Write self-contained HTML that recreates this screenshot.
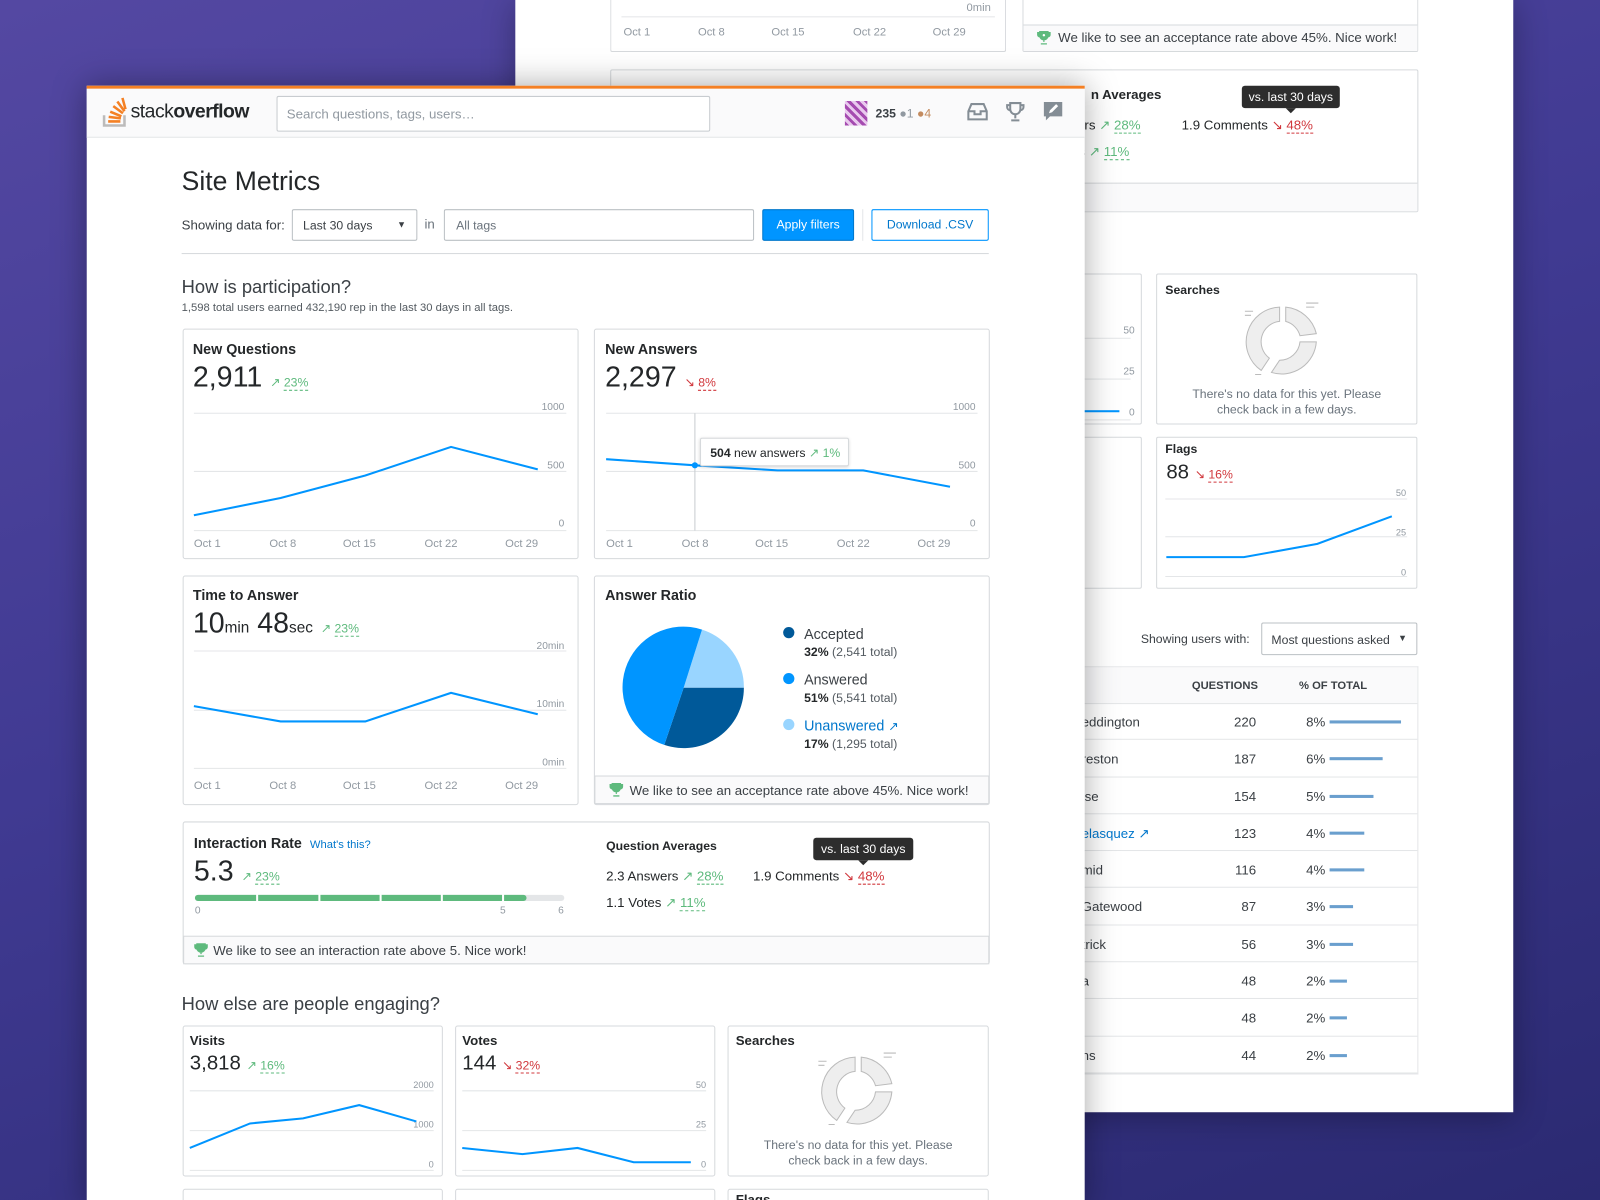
<!DOCTYPE html>
<html><head><meta charset="utf-8">
<style>
*{margin:0;padding:0;box-sizing:border-box}
html,body{width:1600px;height:1200px;overflow:hidden}
body{font-family:"Liberation Sans",Arial,sans-serif;color:#242729;background:#3a3585}
#s{position:absolute;left:0;top:0;width:1568px;height:1176px;transform:scale(1.020408);transform-origin:0 0;overflow:hidden;background:linear-gradient(160deg,#5448a2 0%,#403a92 45%,#2b2a72 100%)}
.a{position:absolute}
.card{position:absolute;background:#fff;border:1px solid #d6d9dc;border-radius:2px}
.t{position:absolute;white-space:nowrap}
.h{font-weight:bold;font-size:14px;color:#242729}
.g{color:#5eba7d}.r{color:#d1383d}
.u{border-bottom:1px dashed currentColor;line-height:1}
.sm{font-size:11px;color:#9199a1}
.foot{position:absolute;left:0;right:0;bottom:0;background:#fafafb;border-top:1px solid #d6d9dc;font-size:13px;color:#3b4045;padding-left:34px}
.tr{position:absolute}
</style></head><body><div id="s">

<!-- background window -->
<div class="a" style="left:505px;top:0;width:978px;height:1090px;background:#fff;box-shadow:0 4px 30px rgba(0,0,0,.3)"></div>
<div class="card" style="left:598px;top:-5px;width:388px;height:56px;border-top:none">
  <div class="a" style="left:10px;right:10px;top:21px;border-top:1px solid #e4e6e8"></div>
  <div class="t sm" style="right:14px;top:7px">0min</div>
  <div class="t sm" style="left:12px;top:31px">Oct 1</div><div class="t sm" style="left:85px;top:31px">Oct 8</div><div class="t sm" style="left:157px;top:31px">Oct 15</div><div class="t sm" style="left:237px;top:31px">Oct 22</div><div class="t sm" style="left:315px;top:31px">Oct 29</div>
</div>
<div class="card" style="left:1002px;top:-5px;width:388px;height:56px;border-top:none">
  <div class="foot" style="height:26px;line-height:24px;padding-left:34px">We like to see an acceptance rate above 45%. Nice work!</div>
  <svg class="tr" style="left:13px;top:35px" width="14" height="14" viewBox="0 0 14 14"><path d="M3 1h8v4a4 4 0 0 1-8 0zM3 2H1v2a2 2 0 0 0 2 2M11 2h2v2a2 2 0 0 1-2 2M7 9v2M4 13h6" fill="#5eba7d" stroke="#5eba7d" stroke-width="1.3"/><circle cx="7" cy="4.5" r="1.2" fill="#fff"/></svg>
</div>
<div class="card" style="left:598px;top:68px;width:792px;height:140px">
  <div class="foot" style="height:28px"></div>
  <div class="t h" style="left:470px;top:16px;font-size:13px">n Averages</div>
  <div class="t" style="left:450px;top:46px;font-size:13px">vers <span class="g">↗ <span class="u">28%</span></span></div>
  <div class="t" style="left:458px;top:72px;font-size:13px">s <span class="g">↗ <span class="u">11%</span></span></div>
  <div class="t" style="left:559px;top:46px;font-size:13px">1.9 Comments <span class="r">↘ <span class="u">48%</span></span></div>
</div>
<div class="a" style="left:1217px;top:84px;width:96px;height:22px;background:#2d2d2d;border-radius:3px;color:#fff;font-size:12px;line-height:22px;text-align:center">vs. last 30 days</div>
<div class="a" style="left:1260px;top:106px;border:5px solid transparent;border-top-color:#2d2d2d"></div>

<div class="card" style="left:1000px;top:268px;width:119px;height:148px">
  <div class="a" style="left:0;right:10px;top:62px;border-top:1px solid #e4e6e8"></div><div class="a" style="left:0;right:10px;top:102px;border-top:1px solid #e4e6e8"></div><div class="a" style="left:0;right:10px;top:142px;border-top:1px solid #e4e6e8"></div>
  <div class="t sm" style="right:6px;top:50px;font-size:10px">50</div><div class="t sm" style="right:6px;top:90px;font-size:10px">25</div><div class="t sm" style="right:6px;top:130px;font-size:10px">0</div>
  <div class="a" style="left:60px;width:36px;top:133px;border-top:2px solid #0095ff"></div>
</div>
<div class="card" style="left:1133px;top:268px;width:256px;height:148px">
  <div class="t h" style="left:8px;top:8px;font-size:12px">Searches</div>
  <svg class="a" style="left:82px;top:26px" width="80" height="76" viewBox="0 0 80 76"><g fill="#eee" stroke="#bbb" stroke-width="1"><path d="M38 6 A34 34 0 0 0 20 68 L28 56 A20 20 0 0 1 38 20Z"/><path d="M44 6 A34 34 0 0 1 74 32 L58 34 A20 20 0 0 0 44 20Z"/><path d="M74 40 A34 34 0 0 1 30 70 L38 58 A20 20 0 0 0 58 40Z"/></g><g stroke="#bbb"><path d="M4 10h8M4 14h6M64 2h12M64 6h8M14 72h6"/></g></svg>
  <div class="a" style="left:0;right:0;top:110px;text-align:center;font-size:12px;color:#6a737c;line-height:15px">There's no data for this yet. Please<br>check back in a few days.</div>
</div>
<div class="card" style="left:1000px;top:428px;width:119px;height:149px"></div>
<div class="card" style="left:1133px;top:428px;width:256px;height:149px">
  <div class="t h" style="left:8px;top:4px;font-size:12px">Flags</div>
  <div class="t" style="left:9px;top:23px;font-size:20px">88 <span class="r" style="font-size:12px">↘ <span class="u">16%</span></span></div>
  <svg class="a" style="left:0;top:0" width="256" height="149"><g stroke="#e4e6e8"><path d="M8 60H245M8 97H245M8 136H245"/></g><g fill="#9199a1" font-size="9" text-anchor="end" font-family="Liberation Sans"><text x="244" y="57">50</text><text x="244" y="96">25</text><text x="244" y="135">0</text></g><polyline points="9,117 85,117 157,104 230,77" fill="none" stroke="#0095ff" stroke-width="2"/></svg>
</div>
<div class="t" style="left:1118px;top:619px;font-size:12px;color:#3b4045">Showing users with:</div>
<div class="a" style="left:1236px;top:610px;width:153px;height:32px;border:1px solid #bbc0c4;border-radius:2px;font-size:12px;color:#3b4045;padding:9px 9px">Most questions asked <span style="float:right;font-size:9px">▼</span></div>
<div class="a" style="left:1060px;top:653px;width:330px;height:400px;border:1px solid #e4e6e8;border-left:none">
  <div class="a" style="left:0;right:0;top:0;height:36px;background:#fafafb;border-bottom:1px solid #e4e6e8"></div>
  <div class="t" style="left:108px;top:12px;font-size:11px;font-weight:bold;color:#3b4045">QUESTIONS</div>
  <div class="t" style="left:213px;top:12px;font-size:11px;font-weight:bold;color:#3b4045">% OF TOTAL</div>
</div>

<!-- table rows -->
<div class="a" style="left:1060px;top:689px;width:329px;font-size:13px;color:#3b4045">
<div style="height:36.3px;border-bottom:1px solid #e4e6e8;position:relative"><span class="t" style="left:0;top:11px">eddington</span><span class="t" style="right:158px;top:11px">220</span><span class="t" style="left:220px;top:11px">8%</span><span class="a" style="left:243px;top:17px;width:70px;height:3px;background:#6a9fce"></span></div>
<div style="height:36.3px;border-bottom:1px solid #e4e6e8;position:relative"><span class="t" style="left:0;top:11px">reston</span><span class="t" style="right:158px;top:11px">187</span><span class="t" style="left:220px;top:11px">6%</span><span class="a" style="left:243px;top:17px;width:52px;height:3px;background:#6a9fce"></span></div>
<div style="height:36.3px;border-bottom:1px solid #e4e6e8;position:relative"><span class="t" style="left:0;top:11px">ise</span><span class="t" style="right:158px;top:11px">154</span><span class="t" style="left:220px;top:11px">5%</span><span class="a" style="left:243px;top:17px;width:43px;height:3px;background:#6a9fce"></span></div>
<div style="height:36.3px;border-bottom:1px solid #e4e6e8;position:relative"><span class="t" style="left:0;top:11px;color:#0077cc">elasquez ↗</span><span class="t" style="right:158px;top:11px">123</span><span class="t" style="left:220px;top:11px">4%</span><span class="a" style="left:243px;top:17px;width:34px;height:3px;background:#6a9fce"></span></div>
<div style="height:36.3px;border-bottom:1px solid #e4e6e8;position:relative"><span class="t" style="left:0;top:11px">mid</span><span class="t" style="right:158px;top:11px">116</span><span class="t" style="left:220px;top:11px">4%</span><span class="a" style="left:243px;top:17px;width:34px;height:3px;background:#6a9fce"></span></div>
<div style="height:36.3px;border-bottom:1px solid #e4e6e8;position:relative"><span class="t" style="left:0;top:11px">Gatewood</span><span class="t" style="right:158px;top:11px">87</span><span class="t" style="left:220px;top:11px">3%</span><span class="a" style="left:243px;top:17px;width:23px;height:3px;background:#6a9fce"></span></div>
<div style="height:36.3px;border-bottom:1px solid #e4e6e8;position:relative"><span class="t" style="left:0;top:11px">trick</span><span class="t" style="right:158px;top:11px">56</span><span class="t" style="left:220px;top:11px">3%</span><span class="a" style="left:243px;top:17px;width:23px;height:3px;background:#6a9fce"></span></div>
<div style="height:36.3px;border-bottom:1px solid #e4e6e8;position:relative"><span class="t" style="left:0;top:11px">a</span><span class="t" style="right:158px;top:11px">48</span><span class="t" style="left:220px;top:11px">2%</span><span class="a" style="left:243px;top:17px;width:17px;height:3px;background:#6a9fce"></span></div>
<div style="height:36.3px;border-bottom:1px solid #e4e6e8;position:relative"><span class="t" style="right:158px;top:11px">48</span><span class="t" style="left:220px;top:11px">2%</span><span class="a" style="left:243px;top:17px;width:17px;height:3px;background:#6a9fce"></span></div>
<div style="height:36.3px;border-bottom:1px solid #e4e6e8;position:relative"><span class="t" style="left:0;top:11px">ns</span><span class="t" style="right:158px;top:11px">44</span><span class="t" style="left:220px;top:11px">2%</span><span class="a" style="left:243px;top:17px;width:17px;height:3px;background:#6a9fce"></span></div>
</div>

<!-- front window -->
<div class="a" style="left:85px;top:84px;width:978px;height:1100px;background:#fff;box-shadow:0 0 30px rgba(0,0,0,.35);border-top:3px solid #f48024">
  <div class="a" style="left:0;top:0;width:978px;height:48px;background:#fafafb;border-bottom:1px solid #e4e6e8"></div>
  <svg class="a" style="left:15px;top:6px" width="26" height="32" viewBox="0 0 26 32"><path d="M2 20v10h20V20" fill="none" stroke="#bcbbbb" stroke-width="2.5"/><g stroke="#f48024" stroke-width="2.5"><path d="M6 26h12M6.5 21.5l12 1.5M8 16.5l11 4.5M11 11l9.5 7M15 6.5l7 9.5M20 3l3 11"/></g></svg>
  <div class="t" style="left:43px;top:12px;font-size:19px;letter-spacing:-.5px;color:#242729">stack<b>overflow</b></div>
  <div class="a" style="left:186px;top:7px;width:425px;height:35px;border:1px solid #c8ccd0;border-radius:2px;background:#fff;font-size:13px;color:#9199a1;padding:9px 9px">Search questions, tags, users…</div>
  <div class="a" style="left:743px;top:12px;width:22px;height:24px;background:repeating-linear-gradient(45deg,#a54bb0 0 3px,#e9c9ee 3px 6px)"></div>
  <div class="t" style="left:773px;top:17px;font-size:12px;font-weight:bold;color:#3b4045">235 <span style="color:#9199a1;font-weight:normal">●1</span> <span style="color:#c38b5f;font-weight:normal">●4</span></div>
  <svg class="a" style="left:862px;top:13px" width="22" height="20"><path d="M2 9l3-7h12l3 7v8H2z M2 9h6v3h6V9h6" fill="none" stroke="#848d95" stroke-width="2"/></svg>
  <svg class="a" style="left:900px;top:12px" width="20" height="22"><path d="M5 2h10v6a5 5 0 0 1-10 0zM5 4H2v2a3 3 0 0 0 3 3M15 4h3v2a3 3 0 0 1-3 3M10 13v4M6 19h8" fill="none" stroke="#848d95" stroke-width="2"/></svg>
  <svg class="a" style="left:937px;top:12px" width="20" height="22"><path d="M1 1h18v14H7l-4 4v-4H1z" fill="#848d95"/><path d="M6 12l1-3 6-6 2 2-6 6z" fill="#fff"/></svg>
</div>

<div class="t" style="left:178px;top:162px;font-size:26px;color:#242729">Site Metrics</div>
<div class="t" style="left:178px;top:213px;font-size:13px;color:#3b4045">Showing data for:</div>
<div class="a" style="left:286px;top:205px;width:123px;height:31px;border:1px solid #bbc0c4;border-radius:2px;font-size:12px;color:#3b4045;padding:8px 10px">Last 30 days<span style="float:right;font-size:9px;padding-top:1px">▼</span></div>
<div class="t" style="left:416px;top:212px;font-size:13px;color:#6a737c">in</div>
<div class="a" style="left:435px;top:205px;width:304px;height:31px;border:1px solid #bbc0c4;border-radius:2px;font-size:12px;color:#6a737c;padding:8px 11px">All tags</div>
<div class="a" style="left:747px;top:205px;width:90px;height:31px;background:#0095ff;border:1px solid #07c;border-radius:2px;color:#fff;font-size:12px;text-align:center;line-height:29px">Apply filters</div>
<div class="a" style="left:845px;top:205px;height:31px;border-left:1px solid #e4e6e8"></div>
<div class="a" style="left:854px;top:205px;width:115px;height:31px;border:1px solid #0095ff;border-radius:2px;color:#07c;font-size:12px;text-align:center;line-height:29px">Download .CSV</div>
<div class="a" style="left:178px;top:248px;width:791px;border-top:1px solid #d6d9dc"></div>
<div class="t" style="left:178px;top:271px;font-size:18px;color:#3b4045">How is participation?</div>
<div class="t" style="left:178px;top:296px;font-size:11px;color:#535a60">1,598 total users earned 432,190 rep in the last 30 days in all tags.</div>

<svg class="a" style="left:0;top:0" width="1568" height="1176" font-family="Liberation Sans">
<g fill="#fff" stroke="#d6d9dc"><rect x="179.5" y="322.5" width="387" height="225" rx="2"/><rect x="582.5" y="322.5" width="387" height="225" rx="2"/><rect x="179.5" y="564.5" width="387" height="224" rx="2"/><rect x="582.5" y="564.5" width="387" height="224" rx="2"/><rect x="179.5" y="805.5" width="790" height="139" rx="2"/><rect x="179.5" y="1005.5" width="254" height="147" rx="2"/><rect x="446.5" y="1005.5" width="254" height="147" rx="2"/><rect x="713.5" y="1005.5" width="255" height="147" rx="2"/><rect x="179.5" y="1165.5" width="254" height="40" rx="2"/><rect x="446.5" y="1165.5" width="254" height="40" rx="2"/><rect x="713.5" y="1165.5" width="255" height="40" rx="2"/></g>
<g fill="#fafafb" stroke="#d6d9dc"><rect x="583" y="760.5" width="386" height="27"/><rect x="180" y="917.5" width="789" height="27"/></g>
<g stroke="#e4e6e8"><path d="M190 405H555M190 462H555M190 520H555M594 405H958M594 462H958M594 520H958M190 638H555M190 696H555M190 753H555M186 1069H425M186 1108H425M186 1147H425M453 1069H692M453 1108H692M453 1147H692"/></g>
<path d="M681 405V520" stroke="#c8ccd0"/>
<g fill="#9199a1" font-size="10" text-anchor="end"><text x="553" y="402">1000</text><text x="553" y="459">500</text><text x="553" y="516">0</text><text x="956" y="402">1000</text><text x="956" y="459">500</text><text x="956" y="516">0</text><text x="553" y="636">20min</text><text x="553" y="693">10min</text><text x="553" y="750">0min</text><text x="425" y="1066" font-size="9">2000</text><text x="425" y="1105" font-size="9">1000</text><text x="425" y="1144" font-size="9">0</text><text x="692" y="1066" font-size="9">50</text><text x="692" y="1105" font-size="9">25</text><text x="692" y="1144" font-size="9">0</text></g>
<g fill="#9199a1" font-size="11"><text x="190" y="536">Oct 1</text><text x="264" y="536">Oct 8</text><text x="336" y="536">Oct 15</text><text x="416" y="536">Oct 22</text><text x="495" y="536">Oct 29</text><text x="594" y="536">Oct 1</text><text x="668" y="536">Oct 8</text><text x="740" y="536">Oct 15</text><text x="820" y="536">Oct 22</text><text x="899" y="536">Oct 29</text><text x="190" y="773">Oct 1</text><text x="264" y="773">Oct 8</text><text x="336" y="773">Oct 15</text><text x="416" y="773">Oct 22</text><text x="495" y="773">Oct 29</text></g>
<g fill="none" stroke="#0095ff" stroke-width="2"><polyline points="190,505 275,488 358,466 442,438 527,460"/><polyline points="594,450 681,456 762,461 846,461 931,477"/><polyline points="190,692 275,707 358,707 442,679 527,700"/><polyline points="186,1125 245,1101 297,1096 352,1083 408,1099"/><polyline points="453,1125 512,1131 566,1125 621,1139 677,1139"/></g>
<circle cx="681" cy="456" r="3" fill="#0095ff"/>
<path d="M670 674L688 617A59 59 0 0 1 729 674Z" fill="#99d5ff"/>
<path d="M670 674L729 674A59 59 0 0 1 651 730Z" fill="#005999"/>
<path d="M670 674L651 730A59 59 0 0 1 688 617Z" fill="#0095ff"/>
<circle cx="773" cy="620" r="5.5" fill="#005999"/><circle cx="773" cy="665" r="5.5" fill="#0095ff"/><circle cx="773" cy="710" r="5.5" fill="#99d5ff"/>
<rect x="191" y="877" width="362" height="6" rx="3" fill="#e4e6e8"/>
<rect x="191" y="877" width="325" height="6" rx="3" fill="#5eba7d"/>
<g stroke="#fff" stroke-width="2"><path d="M252 876v8M313 876v8M373 876v8M433 876v8M493 876v8"/></g>
<g fill="#9199a1" font-size="10"><text x="191" y="895">0</text><text x="490" y="895">5</text><text x="547" y="895">6</text></g>
<g transform="translate(800,1030)"><g fill="#eee" stroke="#bbb"><path d="M38 6 A34 34 0 0 0 20 68 L28 56 A20 20 0 0 1 38 20Z"/><path d="M44 6 A34 34 0 0 1 74 32 L58 34 A20 20 0 0 0 44 20Z"/><path d="M74 40 A34 34 0 0 1 30 70 L38 58 A20 20 0 0 0 58 40Z"/></g><path d="M2 10h8M2 14h6M66 2h12M66 6h8M12 72h6" stroke="#bbb"/></g>
<!-- trophies -->
<g fill="#5eba7d" stroke="#5eba7d" stroke-width="1.3"><g transform="translate(597,767)"><path d="M3 1h8v4a4 4 0 0 1-8 0zM3 2H1v2a2 2 0 0 0 2 2M11 2h2v2a2 2 0 0 1-2 2M7 9v2M4 13h6"/></g><g transform="translate(190,924)"><path d="M3 1h8v4a4 4 0 0 1-8 0zM3 2H1v2a2 2 0 0 0 2 2M11 2h2v2a2 2 0 0 1-2 2M7 9v2M4 13h6"/></g></g>
</svg>

<div class="t h" style="left:189px;top:334px">New Questions</div>
<div class="t" style="left:189px;top:354px;font-size:28px">2,911 <span class="g" style="font-size:12px">↗ <span class="u">23%</span></span></div>
<div class="t h" style="left:593px;top:334px">New Answers</div>
<div class="t" style="left:593px;top:354px;font-size:28px">2,297 <span class="r" style="font-size:12px">↘ <span class="u">8%</span></span></div>
<div class="a" style="left:686px;top:429px;width:146px;height:28px;background:#fff;border:1px solid #d6d9dc;border-radius:2px;box-shadow:0 1px 3px rgba(0,0,0,.15);font-size:12px;padding:7px 9px;white-space:nowrap"><b>504</b> new answers <span class="g">↗ 1%</span></div>
<div class="t h" style="left:189px;top:575px">Time to Answer</div>
<div class="t" style="left:189px;top:595px;font-size:28px">10<span style="font-size:15px">min</span> 48<span style="font-size:15px">sec</span> <span class="g" style="font-size:12px">↗ <span class="u">23%</span></span></div>
<div class="t h" style="left:593px;top:575px">Answer Ratio</div>
<div class="t" style="left:788px;top:613px;font-size:14px;color:#3b4045">Accepted</div>
<div class="t" style="left:788px;top:632px;font-size:12px;color:#535a60"><b style="color:#242729">32%</b> (2,541 total)</div>
<div class="t" style="left:788px;top:658px;font-size:14px;color:#3b4045">Answered</div>
<div class="t" style="left:788px;top:677px;font-size:12px;color:#535a60"><b style="color:#242729">51%</b> (5,541 total)</div>
<div class="t" style="left:788px;top:703px;font-size:14px;color:#0077cc">Unanswered <span style="font-size:12px">↗</span></div>
<div class="t" style="left:788px;top:722px;font-size:12px;color:#535a60"><b style="color:#242729">17%</b> (1,295 total)</div>
<div class="t" style="left:617px;top:767px;font-size:13px;color:#3b4045">We like to see an acceptance rate above 45%. Nice work!</div>

<div class="t h" style="left:190px;top:818px">Interaction Rate <span style="font-weight:normal;font-size:11px;color:#0077cc;margin-left:4px">What's this?</span></div>
<div class="t" style="left:190px;top:838px;font-size:28px">5.3 <span class="g" style="font-size:12px">↗ <span class="u">23%</span></span></div>
<div class="t h" style="left:594px;top:822px;font-size:12px">Question Averages</div>
<div class="t" style="left:594px;top:851px;font-size:13px">2.3 Answers <span class="g">↗ <span class="u">28%</span></span></div>
<div class="t" style="left:594px;top:877px;font-size:13px">1.1 Votes <span class="g">↗ <span class="u">11%</span></span></div>
<div class="t" style="left:738px;top:851px;font-size:13px">1.9 Comments <span class="r">↘ <span class="u">48%</span></span></div>
<div class="a" style="left:797px;top:821px;width:98px;height:22px;background:#2d2d2d;border-radius:3px;color:#fff;font-size:12px;line-height:22px;text-align:center">vs. last 30 days</div>
<div class="a" style="left:841px;top:843px;border:5px solid transparent;border-top-color:#2d2d2d"></div>
<div class="t" style="left:209px;top:924px;font-size:13px;color:#3b4045">We like to see an interaction rate above 5. Nice work!</div>

<div class="t" style="left:178px;top:974px;font-size:18px;color:#3b4045">How else are people engaging?</div>
<div class="t h" style="left:186px;top:1012px;font-size:13px">Visits</div>
<div class="t" style="left:186px;top:1031px;font-size:20px">3,818 <span class="g" style="font-size:12px">↗ <span class="u">16%</span></span></div>
<div class="t h" style="left:453px;top:1012px;font-size:13px">Votes</div>
<div class="t" style="left:453px;top:1031px;font-size:20px">144 <span class="r" style="font-size:12px">↘ <span class="u">32%</span></span></div>
<div class="t h" style="left:721px;top:1012px;font-size:13px">Searches</div>
<div class="a" style="left:713px;top:1115px;width:256px;text-align:center;font-size:12px;color:#6a737c;line-height:15px">There's no data for this yet. Please<br>check back in a few days.</div>
<div class="t h" style="left:721px;top:1168px;font-size:13px">Flags</div>

</div></body></html>
